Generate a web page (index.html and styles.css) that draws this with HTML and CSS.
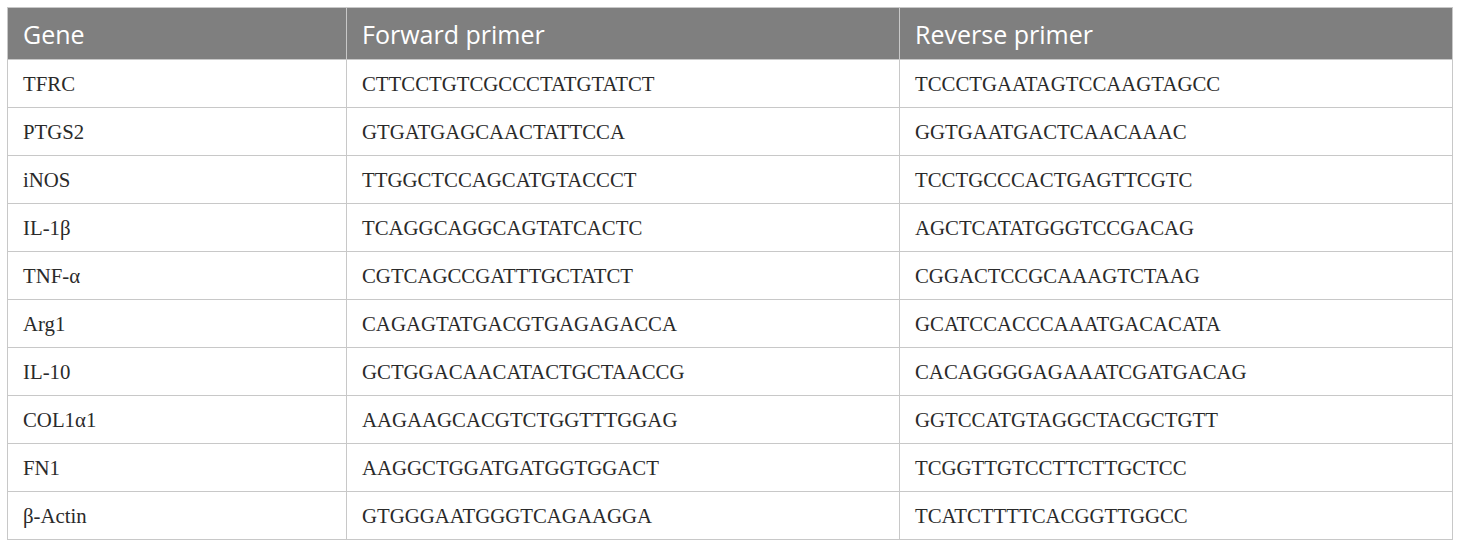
FILE: index.html
```html
<!DOCTYPE html>
<html>
<head>
<meta charset="utf-8">
<link rel="stylesheet" href="styles.css">
</head>
<body>
<table class="primers">
  <colgroup>
    <col class="c-gene">
    <col class="c-fwd">
    <col class="c-rev">
  </colgroup>
  <thead>
    <tr><th>Gene</th><th>Forward primer</th><th>Reverse primer</th></tr>
  </thead>
  <tbody>
    <tr><td>TFRC</td><td>CTTCCTGTCGCCCTATGTATCT</td><td>TCCCTGAATAGTCCAAGTAGCC</td></tr>
    <tr><td>PTGS2</td><td>GTGATGAGCAACTATTCCA</td><td>GGTGAATGACTCAACAAAC</td></tr>
    <tr><td>iNOS</td><td>TTGGCTCCAGCATGTACCCT</td><td>TCCTGCCCACTGAGTTCGTC</td></tr>
    <tr><td>IL-1β</td><td>TCAGGCAGGCAGTATCACTC</td><td>AGCTCATATGGGTCCGACAG</td></tr>
    <tr><td>TNF-α</td><td>CGTCAGCCGATTTGCTATCT</td><td>CGGACTCCGCAAAGTCTAAG</td></tr>
    <tr><td>Arg1</td><td>CAGAGTATGACGTGAGAGACCA</td><td>GCATCCACCCAAATGACACATA</td></tr>
    <tr><td>IL-10</td><td>GCTGGACAACATACTGCTAACCG</td><td>CACAGGGGAGAAATCGATGACAG</td></tr>
    <tr><td>COL1α1</td><td>AAGAAGCACGTCTGGTTTGGAG</td><td>GGTCCATGTAGGCTACGCTGTT</td></tr>
    <tr><td>FN1</td><td>AAGGCTGGATGATGGTGGACT</td><td>TCGGTTGTCCTTCTTGCTCC</td></tr>
    <tr><td>β-Actin</td><td>GTGGGAATGGGTCAGAAGGA</td><td>TCATCTTTTCACGGTTGGCC</td></tr>
  </tbody>
</table>
</body>
</html>
```
FILE: styles.css
```css
html, body {
  margin: 0;
  padding: 0;
  background: #ffffff;
}
body {
  padding: 7px 0 0 7px;
}
.primers {
  border-collapse: collapse;
  table-layout: fixed;
  width: 1446px;
}
.c-gene { width: 339px; }
.c-fwd { width: 553px; }
.c-rev { width: 553px; }
.primers th {
  background: #7f7f7f;
  color: #ffffff;
  font-family: "Open Sans", "Noto Sans", sans-serif;
  font-weight: 400;
  font-size: 25px;
  text-align: left;
  height: 52px;
  padding: 0 15px;
  border: 1px solid #c8c8c8;
  box-sizing: border-box;
  vertical-align: middle;
}
.primers td {
  font-family: "Liberation Serif", "Times New Roman", serif;
  font-size: 20.8px;
  color: #2a2a2a;
  height: 48px;
  padding: 0 15px;
  border: 1px solid #c8c8c8;
  box-sizing: border-box;
  vertical-align: middle;
}
```
